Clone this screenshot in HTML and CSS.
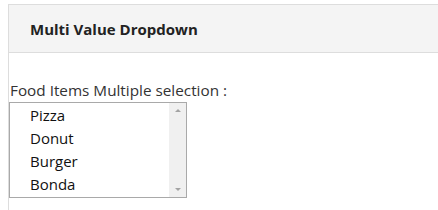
FILE: index.html
```
<!DOCTYPE html>
<html lang="en">
<head>
    <meta charset="UTF-8">
    <title>Multi Value Dropdown</title>
    <link rel="stylesheet" href="styles.css">
</head>
<body>
    <div class="panel">
        <div class="panel-heading">Multi Value Dropdown</div>
        <div class="panel-body">
            <label class="field-label">Food Items Multiple selection :</label>
            <div class="listbox">
                <ul class="options">
                    <li>Pizza</li>
                    <li>Donut</li>
                    <li>Burger</li>
                    <li>Bonda</li>
                </ul>
                <div class="scrollbar">
                    <span class="arrow up"></span>
                    <span class="arrow down"></span>
                </div>
            </div>
        </div>
    </div>
</body>
</html>
```

FILE: styles.css
```
body {
    margin: 0;
    padding: 0;
    background: #fff;
    font-family: "Open Sans", Arial, sans-serif;
    color: #222;
}
.panel {
    margin: 4px 0 0 8px;
    border: 1px solid #ddd;
    border-right: none;
    border-bottom: none;
    height: 205px;
    overflow: hidden;
}
.panel-heading {
    background: #f4f4f4;
    border-bottom: 1px solid #ddd;
    height: 47px;
    line-height: 49px;
    padding-left: 21px;
    font-size: 15px;
    font-weight: bold;
    color: #222;
}
.panel-body {
    padding-top: 27px;
}
.field-label {
    display: block;
    margin-left: 1px;
    font-size: 15.3px;
    line-height: 21px;
    color: #333;
}
.listbox {
    display: flex;
    width: 176px;
    height: 94px;
    border: 1px solid #a9a9a9;
    margin-top: 1px;
}
.options {
    flex: 1;
    list-style: none;
    margin: 0;
    padding: 1px 0 0 20px;
    font-size: 15px;
    line-height: 23px;
    color: #111;
}
.scrollbar {
    position: relative;
    width: 17px;
    background: #f0f0f0;
}
.arrow {
    position: absolute;
    left: 6px;
    width: 0;
    height: 0;
    border-left: 3px solid transparent;
    border-right: 3px solid transparent;
}
.arrow.up {
    top: 6px;
    border-bottom: 3px solid #a3a3a3;
}
.arrow.down {
    bottom: 6px;
    border-top: 3px solid #a3a3a3;
}
```
